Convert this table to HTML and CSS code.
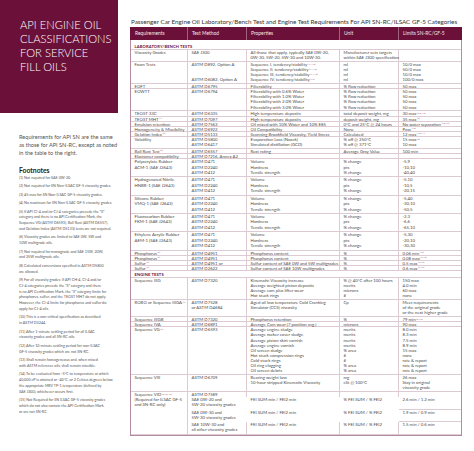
FILE: index.html
```html
<!DOCTYPE html>
<html>
<head>
<meta charset="utf-8">
<link rel="stylesheet" href="styles.css">
</head>
<body>
<div class="page">
  <aside class="side">
    <div class="banner">
      <h1 class="banner-title">API ENGINE OIL<br>CLASSIFICATIONS<br>FOR SERVICE<br>FILL OILS</h1>
    </div>
    <p class="intro">Requirements for API SN are the same<br>as those for API SN-RC, except as noted<br>in the table to the right.</p>
    <h2 class="fn-title">Footnotes</h2>
    <ul class="fn">
      <li>(1) Not required for SAE 0W-20.</li>
      <li>(2) Not required for SN Non-ILSAC GF-5 viscosity grades.</li>
      <li>(3) 45 max for SN Non-ILSAC GF-5 viscosity grades.</li>
      <li>(4) No maximum for SN Non-ILSAC GF-5 viscosity grades.</li>
      <li>(5) If API CI-4 and/or CJ-4 categories precede the “S”<br>category and there is no API Certification Mark, the<br>Sequence VG (ASTM D6593), Ball Rust (ASTM D6557),<br>and Gelation Index (ASTM D5133) tests are not required.</li>
      <li>(6) Viscosity grades are limited to SAE 0W, 5W and<br>10W multigrade oils.</li>
      <li>(7) Not required for monograde and SAE 15W, 20W,<br>and 25W multigrade oils.</li>
      <li>(8) Calculated conversions specified in ASTM D5800<br>are allowed.</li>
      <li>(9) For all viscosity grades: If API CH-4, CI-4 and/or<br>CJ-4 categories precede the “S” category and there<br>is no API Certification Mark, the “S” category limits for<br>phosphorus, sulfur, and the TEOST MHT do not apply.<br>However, the CJ-4 limits for phosphorus and sulfur do<br>apply for CJ-4 oils.</li>
      <li>(10) This is a non-critical specification as described<br>in ASTM D3244.</li>
      <li>(11) After 1-minute settling period for all ILSAC<br>viscosity grades and all SN-RC oils.</li>
      <li>(12) After 10-minute settling period for non-ILSAC<br>GF-5 viscosity grades which are not SN-RC.</li>
      <li>(13) Shall remain homogeneous and, when mixed<br>with ASTM reference oils, shall remain miscible.</li>
      <li>(14) To be evaluated from -5°C to temperature at which<br>40,000 cP is attained or -40°C, or 2 Celsius degrees below<br>the appropriate MRV TP-1 temperature (defined by<br>SAE J300), whichever occurs first.</li>
      <li>(15) Not Required for SN ILSAC GF-5 viscosity grades<br>which do not also contain the API Certification Mark<br>or are not SN-RC.</li>
    </ul>
  </aside>

  <main class="main">
    <h2 class="tbl-title">Passenger Car Engine Oil Laboratory/Bench Test and Engine Test Requirements For API SN-RC/ILSAC GF-5 Categories</h2>
    <div class="thead">
      <div>Requirements</div><div>Test Method</div><div>Properties</div><div>Unit</div><div>Limits SN-RC/GF-5</div>
    </div>
    <div class="tbody">
      <div class="sec sec-lab">LABORATORY/BENCH TESTS</div>

      <div class="r m"><div>Viscosity Grades</div><div>SAE J300</div><div>All those that apply, typically SAE 0W-20,<br>0W-30, 5W-20, 5W-30 and 10W-30.</div><div>Manufacturer sets targets<br>within SAE J300 specification</div><div></div></div>

      <div class="r m"><div>Foam Tests</div><div>ASTM D892, Option A<br><br><br>ASTM D6082, Option A</div><div>Sequence I, tendency/stability<span class="s">(11,13)</span><br>Sequence II, tendency/stability<span class="s">(11,13)</span><br>Sequence III, tendency/stability<span class="s">(11,13)</span><br>Sequence IV, tendency/stability<span class="s">(12)</span></div><div>ml<br>ml<br>ml<br>ml</div><div>10/0 max<br>50/0 max<br>10/0 max<br>100/0 max</div></div>

      <div class="r"><div>EOFT</div><div>ASTM D6795</div><div>Filterability</div><div>% flow reduction</div><div>50 max</div></div>

      <div class="r m"><div>EOWTT</div><div>ASTM D6794</div><div>Filterability with 0.6% Water<br>Filterability with 1.0% Water<br>Filterability with 2.0% Water<br>Filterability with 3.0% Water</div><div>% flow reduction<br>% flow reduction<br>% flow reduction<br>% flow reduction</div><div>50 max<br>50 max<br>50 max<br>50 max</div></div>

      <div class="r"><div>TEOST 33C</div><div>ASTM D6335</div><div>High temperature deposits</div><div>total deposit weight, mg</div><div>30 max<span class="s">(2,3,15)</span></div></div>
      <div class="r"><div>TEOST MHT<span class="s">(4)</span></div><div>ASTM D7097</div><div>High temperature deposits</div><div>deposit weight, mg</div><div>35 max<span class="s">(9)</span></div></div>
      <div class="r"><div>Emulsion retention</div><div>ASTM D7563</div><div>Oil mixed with 10% Water and 10% E85</div><div>0°C and 25°C @ 24 hours</div><div>No water separation<span class="s">(10,15)</span></div></div>
      <div class="r"><div>Homogeneity &amp; Miscibility</div><div>ASTM D6922</div><div>Oil Compatibility</div><div>None</div><div>Pass<span class="s">(13)</span></div></div>
      <div class="r"><div>Gelation Index<span class="s">(5)</span></div><div>ASTM D5133</div><div>Scanning Brookfield Viscosity, Yield Stress</div><div>Calculated</div><div>12 max<span class="s">(10,14)</span></div></div>

      <div class="r m"><div>Volatility</div><div>ASTM D5800<br>ASTM D6417</div><div>Evaporation Loss (Noack)<br>Simulated distillation (GCD)</div><div>% off @ 250°C<br>% off @ 371°C</div><div>15 max<span class="s">(8)</span><br>10 max</div></div>

      <div class="r"><div>Ball Rust Test<span class="s">(5)</span></div><div>ASTM D6557</div><div>Rust rating</div><div>Average Gray Value</div><div>100 min</div></div>
      <div class="r"><div>Elastomer compatibility</div><div>ASTM D7216, Annex A2</div><div></div><div></div><div></div></div>

      <div class="r m rb"><div>Polyacrylate Rubber<br>ACM-1 (SAE J2643)</div><div>ASTM D471<br>ASTM D2240<br>ASTM D412</div><div>Volume<br>Hardness<br>Tensile strength</div><div>% change<br>pts<br>% change</div><div>-5,9<br>-10,10<br>-40,40</div></div>
      <div class="r m rb"><div>Hydrogenated Nitrile<br>HNBR-1 (SAE J2643)</div><div>ASTM D471<br>ASTM D2240<br>ASTM D412</div><div>Volume<br>Hardness<br>Tensile strength</div><div>% change<br>pts<br>% change</div><div>-5,10<br>-10,5<br>-20,15</div></div>
      <div class="r m rb"><div>Silicone Rubber<br>VMQ-1 (SAE J2643)</div><div>ASTM D471<br>ASTM D2240<br>ASTM D412</div><div>Volume<br>Hardness<br>Tensile strength</div><div>% change<br>pts<br>% change</div><div>-5,40<br>-30,10<br>-50,5</div></div>
      <div class="r m rb"><div>Fluorocarbon Rubber<br>FKM-1 (SAE J2643)</div><div>ASTM D471<br>ASTM D2240<br>ASTM D412</div><div>Volume<br>Hardness<br>Tensile strength</div><div>% change<br>pts<br>% change</div><div>-2,3<br>-6,6<br>-65,10</div></div>
      <div class="r m rb"><div>Ethylene Acrylic Rubber<br>AEM-1 (SAE J2643)</div><div>ASTM D471<br>ASTM D2240<br>ASTM D412</div><div>Volume<br>Hardness<br>Tensile strength</div><div>% change<br>pts<br>% change</div><div>-5,30<br>-20,10<br>-30,30</div></div>

      <div class="r"><div>Phosphorus<span class="s">(6)</span></div><div>ASTM D4951</div><div>Phosphorus content</div><div>%</div><div>0.06 min<span class="s">(15)</span></div></div>
      <div class="r"><div>Phosphorus<span class="s">(6)</span></div><div>ASTM D4951</div><div>Phosphorus content</div><div>%</div><div>0.08 max<span class="s">(6,15)</span></div></div>
      <div class="r"><div>Sulfur<span class="s">(6)</span></div><div>ASTM D4951 or</div><div>Sulfur content of SAE 0W and 5W multigrades</div><div>%</div><div>0.5 max<span class="s">(6,15)</span></div></div>
      <div class="r"><div>Sulfur<span class="s">(6)</span></div><div>ASTM D2622</div><div>Sulfur content of SAE 10W multigrades</div><div>%</div><div>0.6 max<span class="s">(6,15)</span></div></div>

      <div class="sec sec-eng">ENGINE TESTS</div>

      <div class="r m"><div>Sequence IIIG</div><div>ASTM D7320</div><div>Kinematic Viscosity increase<br>Average weighted piston deposits<br>Average cam plus lifter wear<br>Hot stuck rings</div><div>% @ 40°C after 100 hours<br>merits<br>microns<br>#</div><div>150 max<br>4.0 min<br>60 max<br>none</div></div>

      <div class="r m"><div>ROBO or Sequence IIIGA<span class="s">(7)</span></div><div>ASTM D7528<br>or ASTM D4684</div><div>Aged oil low temperature Cold Cranking<br>Simulator (CCS) viscosity</div><div>Cp</div><div>Meet requirements<br>of the original grade<br>or the next higher grade</div></div>

      <div class="r"><div>Sequence IIIGB</div><div>ASTM D7320</div><div>Phosphorus retention</div><div>%</div><div>79 min<span class="s">(3,15)</span></div></div>
      <div class="r"><div>Sequence IVA</div><div>ASTM D6891</div><div>Average Cam wear (7 position avg.)</div><div>microns</div><div>90 max</div></div>

      <div class="r m"><div>Sequence VG<span class="s">(5)</span></div><div>ASTM D6593</div><div>Average engine sludge<br>Average rocker cover sludge<br>Average piston skirt varnish<br>Average engine varnish<br>Oil screen sludge<br>Hot stuck compression rings<br>Cold stuck rings<br>Oil ring clogging<br>Oil screen debris</div><div>merits<br>merits<br>merits<br>merits<br>% area<br>#<br>#<br>% area<br>% area</div><div>8.0 min<br>8.3 min<br>7.5 min<br>8.9 min<br>15 max<br>none<br>rate &amp; report<br>rate &amp; report<br>rate &amp; report</div></div>

      <div class="r m"><div>Sequence VIII</div><div>ASTM D6709</div><div>Bearing weight loss<br>10-hour stripped Kinematic Viscosity</div><div>mg<br>cSt @ 100°C</div><div>26 max<br>Stay in original<br>viscosity grade</div></div>

      <div class="r vid">
        <div class="vid-req">Sequence VID<span class="s">(9,10,15)</span><br>(Required for ILSAC GF-5<br>and SN-RC only)</div>
        <div>ASTM D7589</div><div></div><div></div><div></div>
        <div class="sub">SAE 0W-20 and<br>5W-20 viscosity grades</div><div class="sub">FEI SUM min / FEI2 min</div><div class="sub">% FEI SUM / % FEI2</div><div class="sub">2.6 min / 1.2 min</div>
        <div class="sub">SAE 0W-30 and<br>5W-30 viscosity grades</div><div class="sub">FEI SUM min / FEI2 min</div><div class="sub">% FEI SUM / % FEI2</div><div class="sub">1.9 min / 0.9 min</div>
        <div class="sub last">SAE 10W-30 and<br>all other viscosity grades</div><div class="sub last">FEI SUM min / FEI2 min</div><div class="sub last">% FEI SUM / % FEI2</div><div class="sub last">1.5 min / 0.6 min</div>
      </div>
    </div>
  </main>
</div>
</body>
</html>
```

FILE: styles.css
```css
* {
  box-sizing: border-box;
  margin: 0;
  padding: 0;
}

body {
  margin: 0;
  background: #ffffff;
  font-family: Lato, "Open Sans", sans-serif;
  color: #4a4a4a;
}

.page {
  display: flex;
  align-items: flex-start;
  width: 474px;
  height: 451px;
  overflow: hidden;
}

/* ---------- left column ---------- */
.side {
  flex: none;
  width: 118px;
}

.banner {
  height: 113px;
  background: #6b1039;
  padding: 17.6px 0 0 20px;
}

.banner-title {
  font-size: 11.2px;
  line-height: 14px;
  font-weight: 300;
  color: #ffffff;
  white-space: nowrap;
}

.intro {
  margin: 20px 0 0 19px;
  font-size: 5.6px;
  line-height: 8px;
  color: #555555;
  white-space: nowrap;
}

.fn-title {
  margin: 9px 0 0 19px;
  font-size: 6.8px;
  line-height: 8px;
  font-weight: 700;
  color: #222222;
}

.fn {
  list-style: none;
  margin: 0.6px 0 0 19px;
  font-size: 3.7px;
  line-height: 5.75px;
  color: #555555;
  white-space: nowrap;
}

.fn li {
  margin-bottom: 2.75px;
}

/* ---------- table ---------- */
.main {
  flex: none;
  width: 332px;
  margin-left: 12px;
  padding-top: 18px;
}

.tbl-title {
  font-size: 6.3px;
  line-height: 8px;
  font-weight: 400;
  color: #333333;
  padding-left: 1px;
  margin-bottom: 1px;
  white-space: nowrap;
}

.thead {
  display: grid;
  grid-template-columns: 58px 59px 93px 59px 63px;
  height: 12.5px;
  background: #6b1039;
  color: #f3e6ec;
  font-size: 4.9px;
  line-height: 12.5px;
}

.thead > div {
  padding-left: 4px;
  white-space: nowrap;
}

.thead > div:first-child {
  padding-left: 5px;
}

.thead > div:not(:last-child) {
  background: linear-gradient(rgba(255,255,255,0.35), rgba(255,255,255,0.35)) right top / 1px 100% no-repeat;
}

.tbody {
  border: 1px solid #b38ca1;
  border-top: 0;
}

.sec {
  font-weight: 700;
  color: #6b1039;
  font-size: 4.1px;
  letter-spacing: 0.12px;
  line-height: 5px;
  padding-left: 3.5px;
  background: linear-gradient(#dccbd3, #dccbd3) left bottom / 100% 1px no-repeat;
}

.sec-lab {
  padding-top: 4.5px;
  padding-bottom: 1px;
}

.sec-eng {
  padding-top: 1.5px;
  padding-bottom: 0.5px;
}

.r {
  display: grid;
  grid-template-columns: 57px 59px 93px 59px 62px;
  font-size: 4.3px;
  line-height: 5.1px;
  background: linear-gradient(#dccbd3, #dccbd3) left bottom / 100% 1px no-repeat;
}

.r > div {
  padding-left: 3.5px;
  white-space: nowrap;
}

.r > div:nth-child(5n+1),
.r > div:nth-child(5n+2),
.r > div:nth-child(5n+3),
.r > div:nth-child(5n+4) {
  background: linear-gradient(#dccbd3, #dccbd3) right top / 1px 100% no-repeat;
}

.m > div {
  padding-bottom: 1.8px;
}

.rb {
  line-height: 5.5px;
}

/* Sequence VID block */
.vid {
  grid-template-rows: auto auto auto auto;
}

.vid > .vid-req {
  grid-row: 1 / 5;
  background: linear-gradient(#dccbd3, #dccbd3) right top / 1px 100% no-repeat;
}

.vid > div:not(.vid-req) {
  background: none;
}

.vid > div:nth-child(2),
.vid > div:nth-child(3),
.vid > div:nth-child(4) {
  background: linear-gradient(#dccbd3, #dccbd3) right top / 1px 100% no-repeat;
}

.vid > .sub {
  padding-bottom: 2.3px;
  background:
    linear-gradient(#dccbd3, #dccbd3) right top / 1px 100% no-repeat,
    linear-gradient(#dccbd3, #dccbd3) left bottom / 100% 1px no-repeat;
}

.vid > .sub:nth-child(4n+1) {
  background: linear-gradient(#dccbd3, #dccbd3) left bottom / 100% 1px no-repeat;
}

.vid > .sub.last {
  background: linear-gradient(#dccbd3, #dccbd3) right top / 1px 100% no-repeat;
}

.vid > .sub.last:nth-child(4n+1) {
  background: none;
}

.s {
  font-size: 2.6px;
  line-height: 0;
  vertical-align: 1.4px;
  margin-left: 0.6px;
  color: #9b5a7a;
}
```
